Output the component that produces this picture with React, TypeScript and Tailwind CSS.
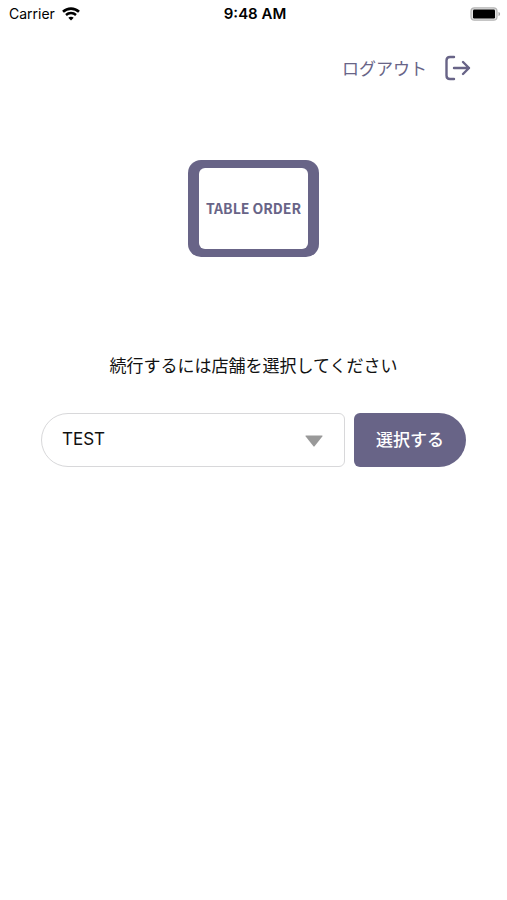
import { useState } from 'react';

const shops = ['TEST'];

function WifiIcon() {
  return (
    <svg viewBox="0 0 18 14" className="h-3.5 w-[18px]" fill="none" aria-hidden="true">
      <path d="M1 4.8C5.5 0.6 12.5 0.6 17 4.8" stroke="#000" strokeWidth="2.6" />
      <path d="M4 8C6.8 5.4 11.2 5.4 14 8" stroke="#000" strokeWidth="2.4" />
      <path d="M9 13.6 6.3 10.7C7.8 9.3 10.2 9.3 11.7 10.7Z" fill="#000" />
    </svg>
  );
}

function BatteryIcon() {
  return (
    <svg viewBox="0 0 31 14" className="h-3.5 w-[31px]" aria-hidden="true">
      <rect x="1" y="0.8" width="26" height="12.4" rx="3.5" fill="#e4e4e4" stroke="#b4b4b4" strokeWidth="1.2" />
      <rect x="3" y="2.5" width="22" height="9" rx="1.2" fill="#000" />
      <path d="M28.5 5C30.6 5.6 30.6 8.4 28.5 9Z" fill="#a6a6a6" />
    </svg>
  );
}

function LogoutIcon() {
  return (
    <svg
      viewBox="0 0 26 26"
      className="size-[26px]"
      fill="none"
      stroke="currentColor"
      strokeWidth="2.4"
      strokeLinecap="round"
      strokeLinejoin="round"
      aria-hidden="true"
    >
      <path d="M9 2H5Q1.5 2 1.5 5.5V20.5Q1.5 24 5 24H9" />
      <path d="M9 13H24M18 7 24 13 18 19" />
    </svg>
  );
}

function StatusBar() {
  return (
    <div className="grid h-7 grid-cols-3 items-center pr-1.5 pl-[9px] font-['Inter',sans-serif] text-sm text-black">
      <div className="flex items-center gap-[7px]">
        <span>Carrier</span>
        <WifiIcon />
      </div>
      <span className="text-center text-[15px] font-semibold">9:48 AM</span>
      <div className="flex justify-end">
        <BatteryIcon />
      </div>
    </div>
  );
}

function Logo() {
  return (
    <div className="rounded-[13px] bg-[#686487] px-[11px] py-2">
      <div className="flex h-[81px] w-[109px] items-center justify-center rounded-md bg-white pb-0.5 text-sm font-bold text-[#686487]">
        TABLE ORDER
      </div>
    </div>
  );
}

export default function App() {
  const [shop, setShop] = useState(shops[0]);

  return (
    <div className="min-h-screen bg-white font-['Noto_Sans_CJK_JP',sans-serif] text-[17px] text-[#111]">
      <StatusBar />

      <header className="flex justify-end px-9 pt-[27px]">
        <button type="button" className="flex items-center gap-[18px] text-[#686487]">
          <span className="leading-[26px]">ログアウト</span>
          <LogoutIcon />
        </button>
      </header>

      <main className="flex flex-col items-center px-[41px] pt-[79px]">
        <Logo />

        <label htmlFor="shop" className="mt-24 leading-6">
          続行するには店舗を選択してください
        </label>

        <div className="mt-9 flex w-full gap-[9px]">
          <div className="relative flex-1">
            <select
              id="shop"
              value={shop}
              onChange={(e) => setShop(e.target.value)}
              className="h-[54px] w-full appearance-none rounded-l-[27px] rounded-r-md border border-[#d8d8da] bg-white pr-12 pl-5 font-['Inter',sans-serif] text-[17px]"
            >
              {shops.map((name) => (
                <option key={name}>{name}</option>
              ))}
            </select>
            <svg
              viewBox="0 0 18 12"
              className="pointer-events-none absolute top-[22px] right-[22px] h-3 w-[18px]"
              fill="#999"
              aria-hidden="true"
            >
              <path d="M1 0.5H17Q18 0.5 17.3 1.4L9.8 11Q9 12 8.2 11L0.7 1.4Q0 0.5 1 0.5Z" />
            </svg>
          </div>
          <button
            type="button"
            className="h-[54px] rounded-l-md rounded-r-[27px] bg-[#686487] px-[22px] pb-0.5 font-medium text-white"
          >
            選択する
          </button>
        </div>
      </main>
    </div>
  );
}
